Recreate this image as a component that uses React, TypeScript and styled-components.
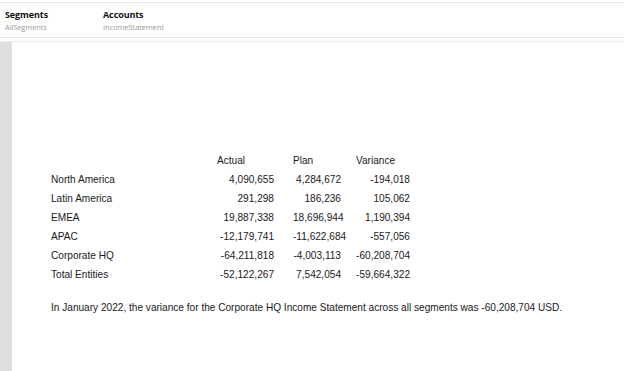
import React from 'react';
import styled, { createGlobalStyle } from 'styled-components';

const GlobalStyle = createGlobalStyle`
  html, body {
    margin: 0;
    padding: 0;
    background: #ffffff;
  }
  #root {
    height: 371px;
  }
`;

const Page = styled.div`
  width: 624px;
  height: 371px;
  display: flex;
  flex-direction: column;
  padding-top: 2px;
  box-sizing: border-box;
  overflow: hidden;
`;

const FilterBar = styled.div`
  display: flex;
  height: 34px;
  border-top: 1px solid #e8e8e8;
  border-bottom: 1px solid #e3e3e3;
  padding-left: 5px;
  box-sizing: content-box;
`;

const Filter = styled.div<{ $width: number }>`
  width: ${p => p.$width}px;
  display: flex;
  flex-direction: column;
  padding-top: 6px;
`;

const FilterTitle = styled.div`
  font-family: 'Open Sans', 'Noto Sans', sans-serif;
  font-weight: 700;
  font-size: 9px;
  line-height: 12px;
  color: #111;
  letter-spacing: -0.1px;
`;

const FilterValue = styled.div`
  font-family: 'Open Sans', 'Noto Sans', sans-serif;
  font-size: 7.5px;
  line-height: 12px;
  color: #9a9a9a;
  letter-spacing: -0.1px;
`;

const Divider = styled.div`
  margin-top: 3px;
  height: 1px;
  background: #ebebeb;
`;

const Body = styled.div`
  flex: 1;
  display: flex;
`;

const Rail = styled.div`
  width: 12px;
  background: #e1dfdd;
`;

const Content = styled.div`
  flex: 1;
  padding: 109px 0 0 39px;
  font-family: 'Liberation Sans', Arial, sans-serif;
  font-size: 10.1px;
  color: #1a1a1a;
`;

const Grid = styled.div`
  display: grid;
  grid-template-columns: 166px 76px 63px 70px;
  grid-auto-rows: 19px;
  align-items: center;
`;

const HeadCell = styled.div`
  text-align: left;
`;

const Label = styled.div``;

const Num = styled.div<{ $pad: number }>`
  text-align: right;
  padding-right: ${p => p.$pad}px;
  white-space: nowrap;
`;

const Summary = styled.p`
  margin: 16px 0 0;
  line-height: 16px;
  white-space: nowrap;
`;

const rows: [string, string, string, string][] = [
  ['North America', '4,090,655', '4,284,672', '-194,018'],
  ['Latin America', '291,298', '186,236', '105,062'],
  ['EMEA', '19,887,338', '18,696,944', '1,190,394'],
  ['APAC', '-12,179,741', '-11,622,684', '-557,056'],
  ['Corporate HQ', '-64,211,818', '-4,003,113', '-60,208,704'],
  ['Total Entities', '-52,122,267', '7,542,054', '-59,664,322'],
];

const pads = [19, 15, 16];

export default function App() {
  return (
    <Page>
      <GlobalStyle />
      <FilterBar>
        <Filter $width={98}>
          <FilterTitle>Segments</FilterTitle>
          <FilterValue>AllSegments</FilterValue>
        </Filter>
        <Filter $width={120}>
          <FilterTitle>Accounts</FilterTitle>
          <FilterValue>IncomeStatement</FilterValue>
        </Filter>
      </FilterBar>
      <Divider />
      <Body>
        <Rail />
        <Content>
          <Grid>
            <div />
            <HeadCell>Actual</HeadCell>
            <HeadCell>Plan</HeadCell>
            <HeadCell>Variance</HeadCell>
            {rows.map(r => (
              <React.Fragment key={r[0]}>
                <Label>{r[0]}</Label>
                {r.slice(1).map((v, i) => (
                  <Num key={i} $pad={pads[i]}>{v}</Num>
                ))}
              </React.Fragment>
            ))}
          </Grid>
          <Summary>
            In January 2022, the variance for the Corporate HQ Income Statement across all segments was -60,208,704 USD.
          </Summary>
        </Content>
      </Body>
    </Page>
  );
}
